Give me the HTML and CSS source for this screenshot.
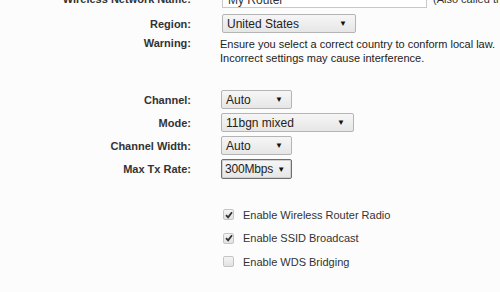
FILE: index.html
```html
<!DOCTYPE html>
<html>
<head>
<meta charset="utf-8">
<link rel="stylesheet" href="styles.css">
</head>
<body>
<div class="page">
  <div class="form">
    <div class="row row-name">
      <div class="label">Wireless Network Name:</div>
      <div class="control">
        <div class="textbox">My Router</div>
        <span class="hint">(Also called the SSID)</span>
      </div>
    </div>
    <div class="row row-gap6">
      <div class="label">Region:</div>
      <div class="control">
        <div class="select w-region"><span>United States</span><span class="arrow">&#9660;</span></div>
      </div>
    </div>
    <div class="row row-warning">
      <div class="label">Warning:</div>
      <div class="control warning">Ensure you select a correct country to conform local law.<br>Incorrect settings may cause interference.</div>
    </div>
    <div class="row row-channel">
      <div class="label">Channel:</div>
      <div class="control">
        <div class="select w-small"><span>Auto</span><span class="arrow">&#9660;</span></div>
      </div>
    </div>
    <div class="row row-gap4">
      <div class="label">Mode:</div>
      <div class="control">
        <div class="select w-mode"><span>11bgn mixed</span><span class="arrow">&#9660;</span></div>
      </div>
    </div>
    <div class="row row-gap4">
      <div class="label">Channel Width:</div>
      <div class="control">
        <div class="select w-small"><span>Auto</span><span class="arrow">&#9660;</span></div>
      </div>
    </div>
    <div class="row row-gap4">
      <div class="label">Max Tx Rate:</div>
      <div class="control">
        <div class="select w-small focused"><span>300Mbps</span><span class="arrow">&#9660;</span></div>
      </div>
    </div>
  </div>
  <div class="checks">
    <div class="check">
      <span class="box"><svg width="8" height="8" viewBox="0 0 8 8"><path d="M1 4.2 L3.1 6.3 L7 1.3" fill="none" stroke="#333" stroke-width="1.8"/></svg></span>
      <span>Enable Wireless Router Radio</span>
    </div>
    <div class="check">
      <span class="box"><svg width="8" height="8" viewBox="0 0 8 8"><path d="M1 4.2 L3.1 6.3 L7 1.3" fill="none" stroke="#333" stroke-width="1.8"/></svg></span>
      <span>Enable SSID Broadcast</span>
    </div>
    <div class="check">
      <span class="box"></span>
      <span>Enable WDS Bridging</span>
    </div>
  </div>
</div>
</body>
</html>
```
FILE: styles.css
```css
html, body {
  margin: 0;
  padding: 0;
  background: #fcfcfc;
  overflow: hidden;
}
.page {
  width: 500px;
  height: 292px;
  overflow: hidden;
  font-family: "Liberation Sans", Arial, sans-serif;
  font-size: 11px;
  color: #222;
}
.form {
  display: flex;
  flex-direction: column;
  margin-top: -12px;
}
.row {
  display: grid;
  grid-template-columns: 191px 1fr;
  column-gap: 31px;
  align-items: center;
  white-space: nowrap;
}
.row-name { align-items: end; }
.row-name .label { padding-bottom: 3px; }
.row-name .hint { padding-top: 1px; }
.row-gap6 { margin-top: 6px; }
.row-gap4 { margin-top: 4px; }
.row-warning { margin-top: 4px; align-items: start; }
.row-channel { margin-top: 25px; }
.row-channel .control,
.row-gap4 .control { margin-left: -1px; }
.label {
  text-align: right;
  font-weight: bold;
  color: #333;
}
.control {
  display: flex;
  align-items: center;
  gap: 6px;
}
.textbox {
  box-sizing: border-box;
  width: 205px;
  height: 20px;
  border: 1px solid #c8c8c8;
  background: #fff;
  padding: 4px 5px 0;
  font-size: 12px;
  color: #333;
  line-height: 14px;
}
.hint { color: #333; }
.warning {
  display: block;
  line-height: 14px;
  color: #222;
  margin-left: -2px;
}
.select {
  box-sizing: border-box;
  height: 19px;
  display: flex;
  align-items: center;
  justify-content: space-between;
  padding: 0 8px 0 4px;
  border: 1px solid #b4b4b4;
  border-radius: 2px;
  background: linear-gradient(#f6f6f6, #e6e6e6);
  font-size: 12px;
  color: #222;
}
.select .arrow {
  font-size: 8px;
  color: #111;
}
.select.focused {
  height: 20px;
  padding: 0 6px 0 3px;
  border-color: #6e6e6e;
  box-shadow: inset 0 0 0 1px #d0d0d0;
  letter-spacing: -0.2px;
}
.w-region { width: 134px; }
.w-small { width: 71px; }
.w-mode { width: 133px; }
.checks {
  display: flex;
  flex-direction: column;
  margin-top: 24px;
  padding-left: 223px;
  color: #333;
}
.check {
  height: 23.5px;
  display: flex;
  align-items: center;
  gap: 9px;
}
.box {
  box-sizing: border-box;
  width: 11px;
  height: 11px;
  border: 1px solid #c4c4c4;
  border-radius: 2px;
  background: linear-gradient(#f4f4f4, #e2e2e2);
  display: flex;
  align-items: center;
  justify-content: center;
}
```
